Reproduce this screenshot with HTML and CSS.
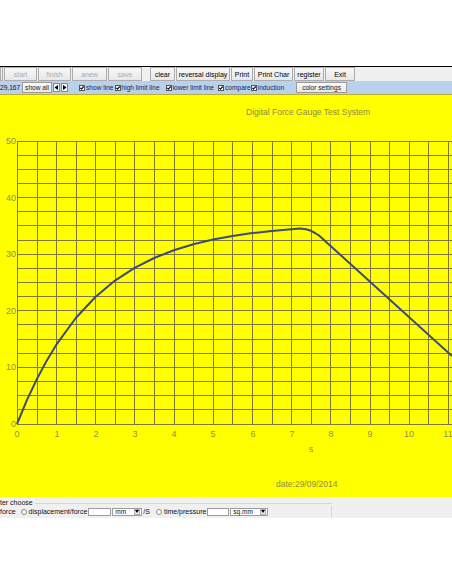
FILE: index.html
```html
<!DOCTYPE html>
<html>
<head>
<meta charset="utf-8">
<link rel="stylesheet" href="styles.css">
</head>
<body>
<div class="spacer"></div>
<div class="toolbar">
  <div class="btn w3"></div>
  <div class="btn off w33">start</div>
  <div class="btn off w33">finish</div>
  <div class="btn off w35">anew</div>
  <div class="btn off w34">save</div>
  <div class="btn w25 gap">clear</div>
  <div class="btn w54">reversal display</div>
  <div class="btn w22">Print</div>
  <div class="btn w39">Print Char</div>
  <div class="btn w30">register</div>
  <div class="btn w30">Exit</div>
</div>
<div class="optbar">
  <span class="coord">29,167</span>
  <span class="sbtn w30">show all</span>
  <span class="abtn"><svg width="5" height="5" viewBox="0 0 5 5"><polygon points="4,0 4,5 0.5,2.5" fill="#000"/></svg></span>
  <span class="abtn"><svg width="5" height="5" viewBox="0 0 5 5"><polygon points="1,0 1,5 4.5,2.5" fill="#000"/></svg></span>
  <span class="opt m10"><svg class="cb" width="6" height="6" viewBox="0 0 6 6"><rect x="0.5" y="0.5" width="5" height="5" fill="#fff" stroke="#555"/><path d="M1.3 2.9L2.5 4.2L4.7 1.5" fill="none" stroke="#111" stroke-width="1.2"/></svg>show line</span>
  <span class="opt m1"><svg class="cb" width="6" height="6" viewBox="0 0 6 6"><rect x="0.5" y="0.5" width="5" height="5" fill="#fff" stroke="#555"/><path d="M1.3 2.9L2.5 4.2L4.7 1.5" fill="none" stroke="#111" stroke-width="1.2"/></svg>high limit line</span>
  <span class="opt m6"><svg class="cb" width="6" height="6" viewBox="0 0 6 6"><rect x="0.5" y="0.5" width="5" height="5" fill="#fff" stroke="#555"/><path d="M1.3 2.9L2.5 4.2L4.7 1.5" fill="none" stroke="#111" stroke-width="1.2"/></svg>lower limit line</span>
  <span class="opt m4"><svg class="cb" width="6" height="6" viewBox="0 0 6 6"><rect x="0.5" y="0.5" width="5" height="5" fill="#fff" stroke="#555"/><path d="M1.3 2.9L2.5 4.2L4.7 1.5" fill="none" stroke="#111" stroke-width="1.2"/></svg>compare</span>
  <span class="opt m0"><svg class="cb" width="6" height="6" viewBox="0 0 6 6"><rect x="0.5" y="0.5" width="5" height="5" fill="#fff" stroke="#555"/><path d="M1.3 2.9L2.5 4.2L4.7 1.5" fill="none" stroke="#111" stroke-width="1.2"/></svg>induction</span>
  <span class="sbtn w51 m12">color settings</span>
</div>
<div class="chart">
  <svg width="452" height="402" viewBox="0 0 452 402">
    <text class="title" x="246" y="20">Digital Force Gauge Test System</text>
    <path class="grid" d="M17.5 46.5V329.5M37.5 46.5V329.5M56.5 46.5V329.5M76.5 46.5V329.5M95.5 46.5V329.5M115.5 46.5V329.5M134.5 46.5V329.5M154.5 46.5V329.5M174.5 46.5V329.5M193.5 46.5V329.5M213.5 46.5V329.5M232.5 46.5V329.5M252.5 46.5V329.5M272.5 46.5V329.5M291.5 46.5V329.5M311.5 46.5V329.5M330.5 46.5V329.5M350.5 46.5V329.5M370.5 46.5V329.5M389.5 46.5V329.5M409.5 46.5V329.5M428.5 46.5V329.5M448.5 46.5V329.5M17 46.5H452M17 60.5H452M17 74.5H452M17 88.5H452M17 102.5H452M17 116.5H452M17 130.5H452M17 145.5H452M17 159.5H452M17 173.5H452M17 187.5H452M17 201.5H452M17 215.5H452M17 229.5H452M17 244.5H452M17 258.5H452M17 272.5H452M17 286.5H452M17 300.5H452M17 314.5H452M17 329.5H452"/>
    <g class="ylab">
      <text x="16" y="49">50</text>
      <text x="16" y="106">40</text>
      <text x="16" y="162">30</text>
      <text x="16" y="219">20</text>
      <text x="16" y="275">10</text>
      <text x="16" y="332">0</text>
    </g>
    <g class="xlab">
      <text x="17" y="342">0</text>
      <text x="57" y="342">1</text>
      <text x="96" y="342">2</text>
      <text x="135" y="342">3</text>
      <text x="174" y="342">4</text>
      <text x="213" y="342">5</text>
      <text x="253" y="342">6</text>
      <text x="292" y="342">7</text>
      <text x="331" y="342">8</text>
      <text x="370" y="342">9</text>
      <text x="409" y="342">10</text>
      <text x="448" y="342">11</text>
      <text x="311" y="357">s</text>
    </g>
    <polyline class="curve" points="17,329 26.8,305.4 36.6,284.6 46.4,266.2 56.2,249.9 75.8,223 95.4,202 115,185.6 134.6,172.9 154.2,163 173.8,155.2 193.4,149.2 213,144.5 232.6,140.9 252.2,138.1 271.8,135.9 291.4,134.3 300,133.6 306,134.2 311,135.8 315,138 319,140.5 452,261"/>
    <text class="title" x="276" y="392">date:29/09/2014</text>
  </svg>
</div>
<div class="params">
  <div class="legend-row"><span class="legend">ter choose</span><span class="gline"></span></div>
  <div class="param-row">
    <span>force</span>
    <span class="radio"></span>
    <span>displacement/force</span>
    <span class="field w23"></span>
    <span class="select w30"><span class="sel-text">mm</span><span class="drop"><svg width="4" height="3" viewBox="0 0 4 3"><polygon points="0,0 4,0 2,3" fill="#000"/></svg></span></span>
    <span class="unit">/S</span>
    <span class="radio r2"></span>
    <span>time/pressure</span>
    <span class="field w22 m4"></span>
    <span class="select w38"><span class="sel-text">sq.mm</span><span class="drop"><svg width="4" height="3" viewBox="0 0 4 3"><polygon points="0,0 4,0 2,3" fill="#000"/></svg></span></span>
  </div>
</div>
</body>
</html>
```
FILE: styles.css
```css
body {
  margin: 0;
  background: #fff;
  font-family: "Liberation Sans", Arial, sans-serif;
  width: 452px;
  height: 584px;
  overflow: hidden;
}
.spacer { height: 66px; }
.toolbar {
  display: flex;
  height: 14px;
  border-top: 1px solid #000;
  background: #f0f0f0;
}
.btn {
  box-sizing: border-box;
  height: 14px;
  margin-right: 1px;
  border: 1px solid #acacac;
  background: linear-gradient(#f8f8f8, #e8e8e8);
  font-size: 7px;
  color: #000;
  display: flex;
  align-items: center;
  justify-content: center;
  flex: none;
  white-space: nowrap;
}
.btn.off { color: #ababab; }
.btn.gap { margin-left: 7px; }
.w3 { width: 3px; }
.w22 { width: 22px; }
.w23 { width: 23px; }
.w25 { width: 25px; }
.w30 { width: 30px; }
.w33 { width: 33px; }
.w34 { width: 34px; }
.w35 { width: 35px; }
.w38 { width: 38px; }
.w39 { width: 39px; }
.w51 { width: 51px; }
.w54 { width: 54px; }

.optbar {
  display: flex;
  align-items: center;
  height: 13px;
  background: #b9d1ea;
  border-bottom: 1px solid #b7ad3a;
  font-size: 6.6px;
  color: #1c2450;
  white-space: nowrap;
}
.coord { width: 22px; flex: none; color: #111; }
.sbtn {
  box-sizing: border-box;
  height: 11px;
  border: 1px solid #9a9a9a;
  background: linear-gradient(#fbfbfb, #e6e6e6);
  display: flex;
  align-items: center;
  justify-content: center;
  flex: none;
  margin-right: 1px;
  color: #222;
}
.abtn {
  box-sizing: border-box;
  width: 7px;
  height: 9px;
  border: 1px solid #888;
  background: #f4f4f4;
  display: flex;
  align-items: center;
  justify-content: center;
  margin-right: 1px;
  flex: none;
}
.opt { display: flex; align-items: center; flex: none; }
.cb { margin-right: 1px; flex: none; }
.m0 { margin-left: 0; }
.m1 { margin-left: 1px; }
.m4 { margin-left: 4px; }
.m6 { margin-left: 6px; }
.m10 { margin-left: 10px; }
.m12 { margin-left: 12px; }

.chart {
  height: 402px;
  background: #ffff00;
}
.chart svg { display: block; }
.title {
  font-family: "Liberation Sans", Arial, sans-serif;
  font-size: 8.5px;
  fill: #8e8c48;
}
.grid {
  fill: none;
  stroke: #7d7840;
  stroke-width: 1;
}
.ylab text {
  font-family: "Liberation Sans", Arial, sans-serif;
  font-size: 9px;
  fill: #919050;
  text-anchor: end;
}
.xlab text {
  font-family: "Liberation Sans", Arial, sans-serif;
  font-size: 9px;
  fill: #919050;
  text-anchor: middle;
}
.curve {
  fill: none;
  stroke: #3c4a78;
  stroke-width: 2;
  stroke-linejoin: round;
}

.params {
  height: 21px;
  background: #f0f0f0;
  font-size: 7px;
  color: #111;
}
.legend-row {
  display: flex;
  align-items: center;
  height: 8px;
  padding-top: 1px;
  width: 332px;
}
.legend { white-space: nowrap; }
.gline {
  flex: 1;
  height: 0;
  margin-left: 2px;
  margin-top: 2px;
  border-top: 1px solid #d5d5d5;
}
.param-row {
  display: flex;
  align-items: center;
  height: 11px;
  width: 331px;
  border-right: 1px solid #d5d5d5;
  white-space: nowrap;
}
.radio {
  box-sizing: border-box;
  width: 6px;
  height: 6px;
  border-radius: 50%;
  border: 1px solid #888;
  background: #fff;
  margin: 0 2px 0 5px;
  flex: none;
}
.radio.r2 { margin-left: 6px; }
.field {
  box-sizing: border-box;
  height: 8px;
  border: 1px solid #9c9c9c;
  background: #fff;
  margin-left: 1px;
  flex: none;
}
.select {
  box-sizing: border-box;
  height: 8px;
  border: 1px solid #9c9c9c;
  background: #fff;
  display: flex;
  align-items: center;
  flex: none;
  margin-left: 1px;
}
.sel-text { flex: 1; padding-left: 2px; font-size: 6.5px; }
.drop {
  box-sizing: border-box;
  width: 6px;
  height: 6px;
  margin-right: 1px;
  border: 1px solid #b0b0b0;
  background: #ececec;
  display: flex;
  align-items: center;
  justify-content: center;
}
.unit { margin-left: 1px; }
```
